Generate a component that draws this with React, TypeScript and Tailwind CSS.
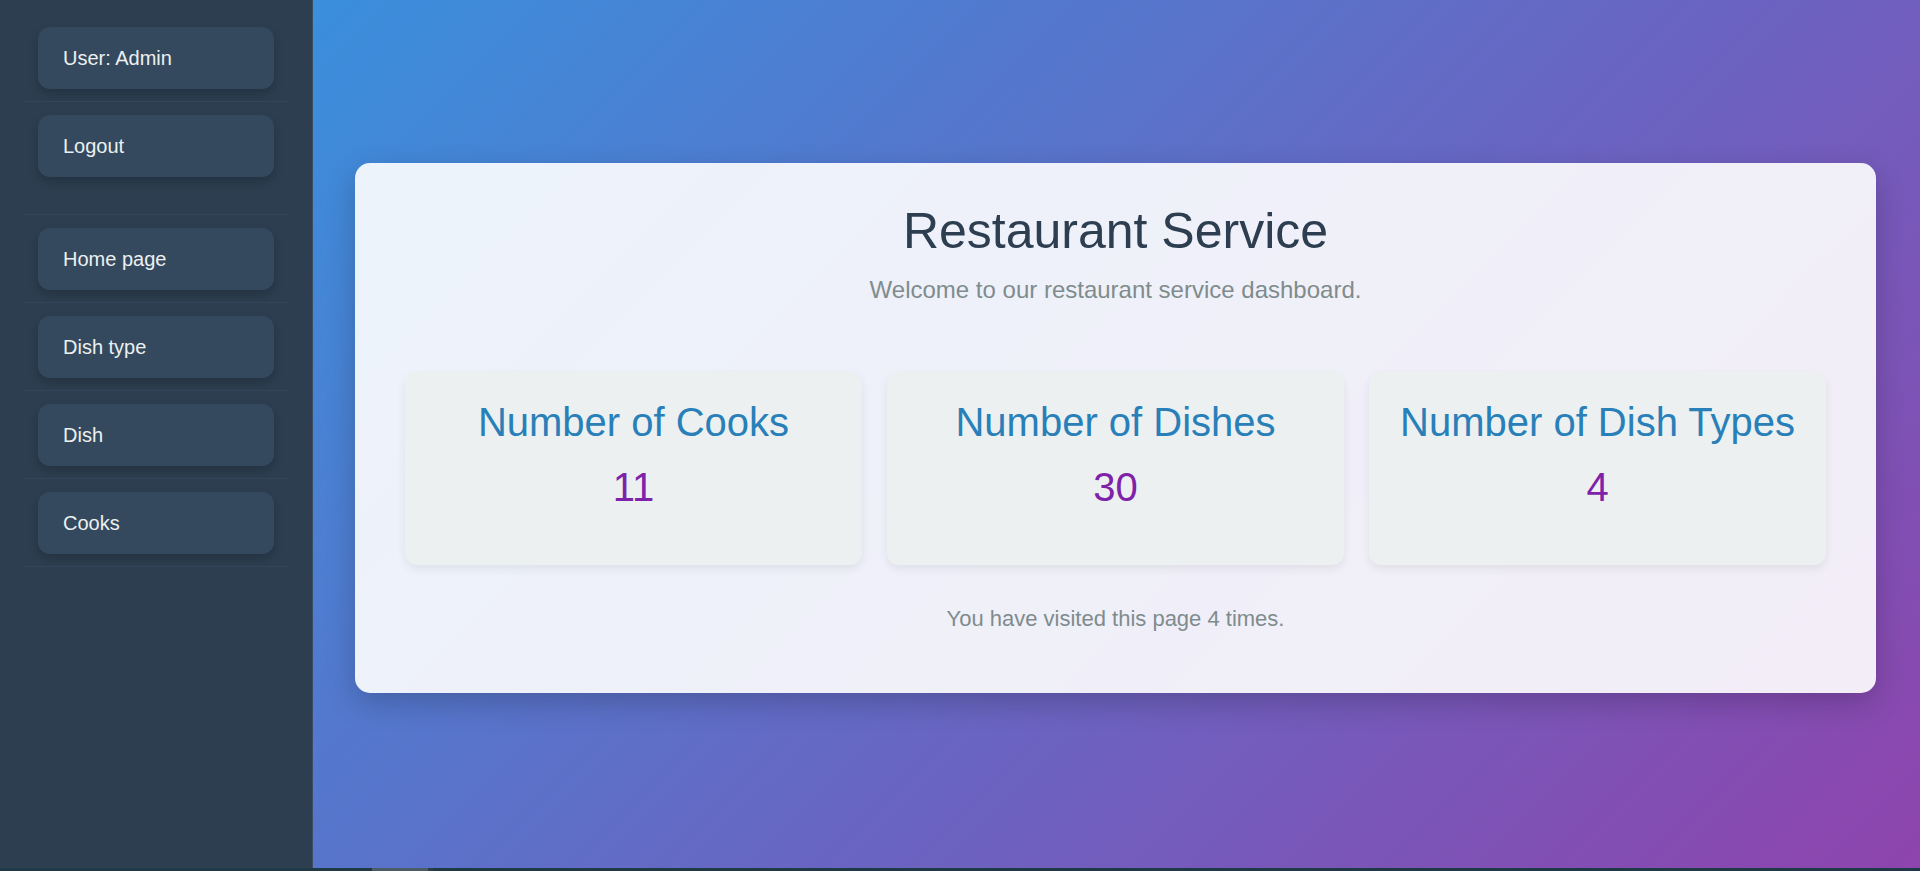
import React from "react";

const navTop = ["User: Admin", "Logout"];
const navLinks = ["Home page", "Dish type", "Dish", "Cooks"];

const stats = [
  { label: "Number of Cooks", value: 11 },
  { label: "Number of Dishes", value: 30 },
  { label: "Number of Dish Types", value: 4 },
];

function NavButton({ label }: { label: string }) {
  return (
    <div className="mx-[13px] h-[62px] flex items-center pl-[25px] bg-[#34495e] rounded-[12px] shadow-[0_5px_10px_rgba(0,0,0,0.18)] text-[20px] text-[#ecf0f1] cursor-pointer">
      {label}
    </div>
  );
}

export default function App() {
  return (
    <div className="h-[871px] flex flex-col overflow-hidden font-['Liberation_Sans',Arial,sans-serif]">
      <div className="flex flex-1 min-h-0">
        {/* Sidebar */}
        <aside className="w-[313px] shrink-0 bg-[#2c3e50] border-r border-[#3b4d60] pt-[14px] px-[25px]">
          <ul>
            <li className="pt-[13px] pb-[12px] border-b border-[#34475a]">
              <NavButton label={navTop[0]} />
            </li>
            <li className="pt-[13px] pb-[37px] border-b border-[#34475a]">
              <NavButton label={navTop[1]} />
            </li>
            {navLinks.map((l) => (
              <li key={l} className="pt-[13px] pb-[12px] border-b border-[#34475a]">
                <NavButton label={l} />
              </li>
            ))}
          </ul>
        </aside>

        {/* Main */}
        <main className="flex-1 bg-[linear-gradient(135deg,#3a8fdc_0%,#8e44ad_100%)] pl-[42px] pr-[44px] pt-[163px]">
          <div className="bg-white/90 rounded-[15px] shadow-[0_10px_30px_rgba(0,0,0,0.2)] px-[50px] pt-[40px] pb-[62px] text-center">
            <h1 className="text-[50px] leading-[57px] text-[#2c3e50]">Restaurant Service</h1>
            <p className="mt-[16px] text-[24px] leading-[28px] text-[#7f8c8d]">
              Welcome to our restaurant service dashboard.
            </p>

            <div className="mt-[68px] grid grid-cols-3 gap-[25px]">
              {stats.map((s) => (
                <div
                  key={s.label}
                  className="h-[193px] bg-[#ecf0f1] rounded-[12px] shadow-[0_4px_10px_rgba(0,0,0,0.07)] pt-[27px]"
                >
                  <h3 className="text-[40px] leading-[46px] text-[#2980b9]">{s.label}</h3>
                  <p className="mt-[19px] text-[40px] leading-[46px] text-[#7e22aa]">{s.value}</p>
                </div>
              ))}
            </div>

            <p className="mt-[41px] text-[22px] leading-[25px] text-[#7f8c8d]">
              You have visited this page 4 times.
            </p>
          </div>
        </main>
      </div>

      {/* bottom scroll strip */}
      <div className="h-[3px] shrink-0 flex bg-[#1f3a46]">
        <div className="w-[372px]" />
        <div className="w-[56px] bg-[#4a5d66]" />
        <div className="w-[5px] bg-[#2f3f48]" />
      </div>
    </div>
  );
}
